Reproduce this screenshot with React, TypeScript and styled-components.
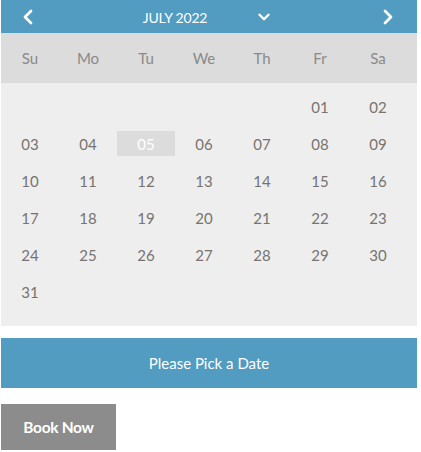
import styled, { createGlobalStyle } from 'styled-components';
import { ChevronLeft, ChevronRight, ChevronDown } from 'lucide-react';

const GlobalStyle = createGlobalStyle`
  body {
    margin: 0;
    padding: 0;
    background: #ffffff;
    font-family: Lato, 'Open Sans', sans-serif;
  }
`;

const Page = styled.div`
  width: 416px;
  padding-left: 1px;
`;

const Calendar = styled.div`
  width: 416px;
`;

const Header = styled.div`
  height: 33px;
  background: #529bc1;
  color: #ffffff;
  display: flex;
  align-items: center;
  justify-content: space-between;
  padding: 0 17px 0 15px;
  box-sizing: border-box;
`;

const NavButton = styled.button`
  background: none;
  border: none;
  padding: 0;
  width: 24px;
  height: 24px;
  color: #ffffff;
  display: flex;
  align-items: center;
  justify-content: center;
  cursor: pointer;
`;

const MonthSelect = styled.div`
  display: flex;
  align-items: center;
  gap: 48px;
  font-size: 14px;
  letter-spacing: -0.2px;
  padding-top: 1px;
`;

const WeekRow = styled.div`
  height: 50px;
  background: #dcdcdc;
  display: grid;
  grid-template-columns: repeat(7, 58px);
  align-items: center;
`;

const WeekDay = styled.div`
  text-align: center;
  font-size: 15px;
  color: #8a8a8a;
`;

const Body = styled.div`
  background: #eeeeee;
  padding: 5px 0 16px;
  display: grid;
  grid-template-columns: repeat(7, 58px);
  grid-auto-rows: 37px;
`;

const Day = styled.div<{ $selected?: boolean }>`
  align-self: center;
  height: 25px;
  display: flex;
  align-items: center;
  justify-content: center;
  font-size: 15px;
  color: ${(p) => (p.$selected ? '#ffffff' : '#777370')};
  background: ${(p) => (p.$selected ? '#dcdcdc' : 'transparent')};
`;

const PickBar = styled.div`
  margin-top: 12px;
  height: 50px;
  background: #529bc1;
  color: #ffffff;
  font-size: 15px;
  display: flex;
  align-items: center;
  justify-content: center;
`;

const BookButton = styled.button`
  margin-top: 16px;
  width: 115px;
  height: 46px;
  border: none;
  background: #8c8c8c;
  color: #ffffff;
  font-family: Lato, 'Open Sans', sans-serif;
  font-weight: 700;
  font-size: 15.5px;
  letter-spacing: -0.3px;
  cursor: pointer;
`;

const weekDays = ['Su', 'Mo', 'Tu', 'We', 'Th', 'Fr', 'Sa'];
const leading = 5;
const days = Array.from({ length: 31 }, (_, i) => String(i + 1).padStart(2, '0'));

export default function App() {
  return (
    <>
      <GlobalStyle />
      <Page>
        <Calendar>
          <Header>
            <NavButton aria-label="Previous month">
              <ChevronLeft size={24} strokeWidth={2.75} />
            </NavButton>
            <MonthSelect>
              <span>JULY 2022</span>
              <ChevronDown size={18} strokeWidth={3.25} />
            </MonthSelect>
            <NavButton aria-label="Next month">
              <ChevronRight size={24} strokeWidth={2.75} />
            </NavButton>
          </Header>
          <WeekRow>
            {weekDays.map((d) => (
              <WeekDay key={d}>{d}</WeekDay>
            ))}
          </WeekRow>
          <Body>
            {Array.from({ length: leading }, (_, i) => (
              <Day key={`e${i}`} />
            ))}
            {days.map((d) => (
              <Day key={d} $selected={d === '05'}>
                {d}
              </Day>
            ))}
          </Body>
        </Calendar>
        <PickBar>Please Pick a Date</PickBar>
        <BookButton>Book Now</BookButton>
      </Page>
    </>
  );
}
